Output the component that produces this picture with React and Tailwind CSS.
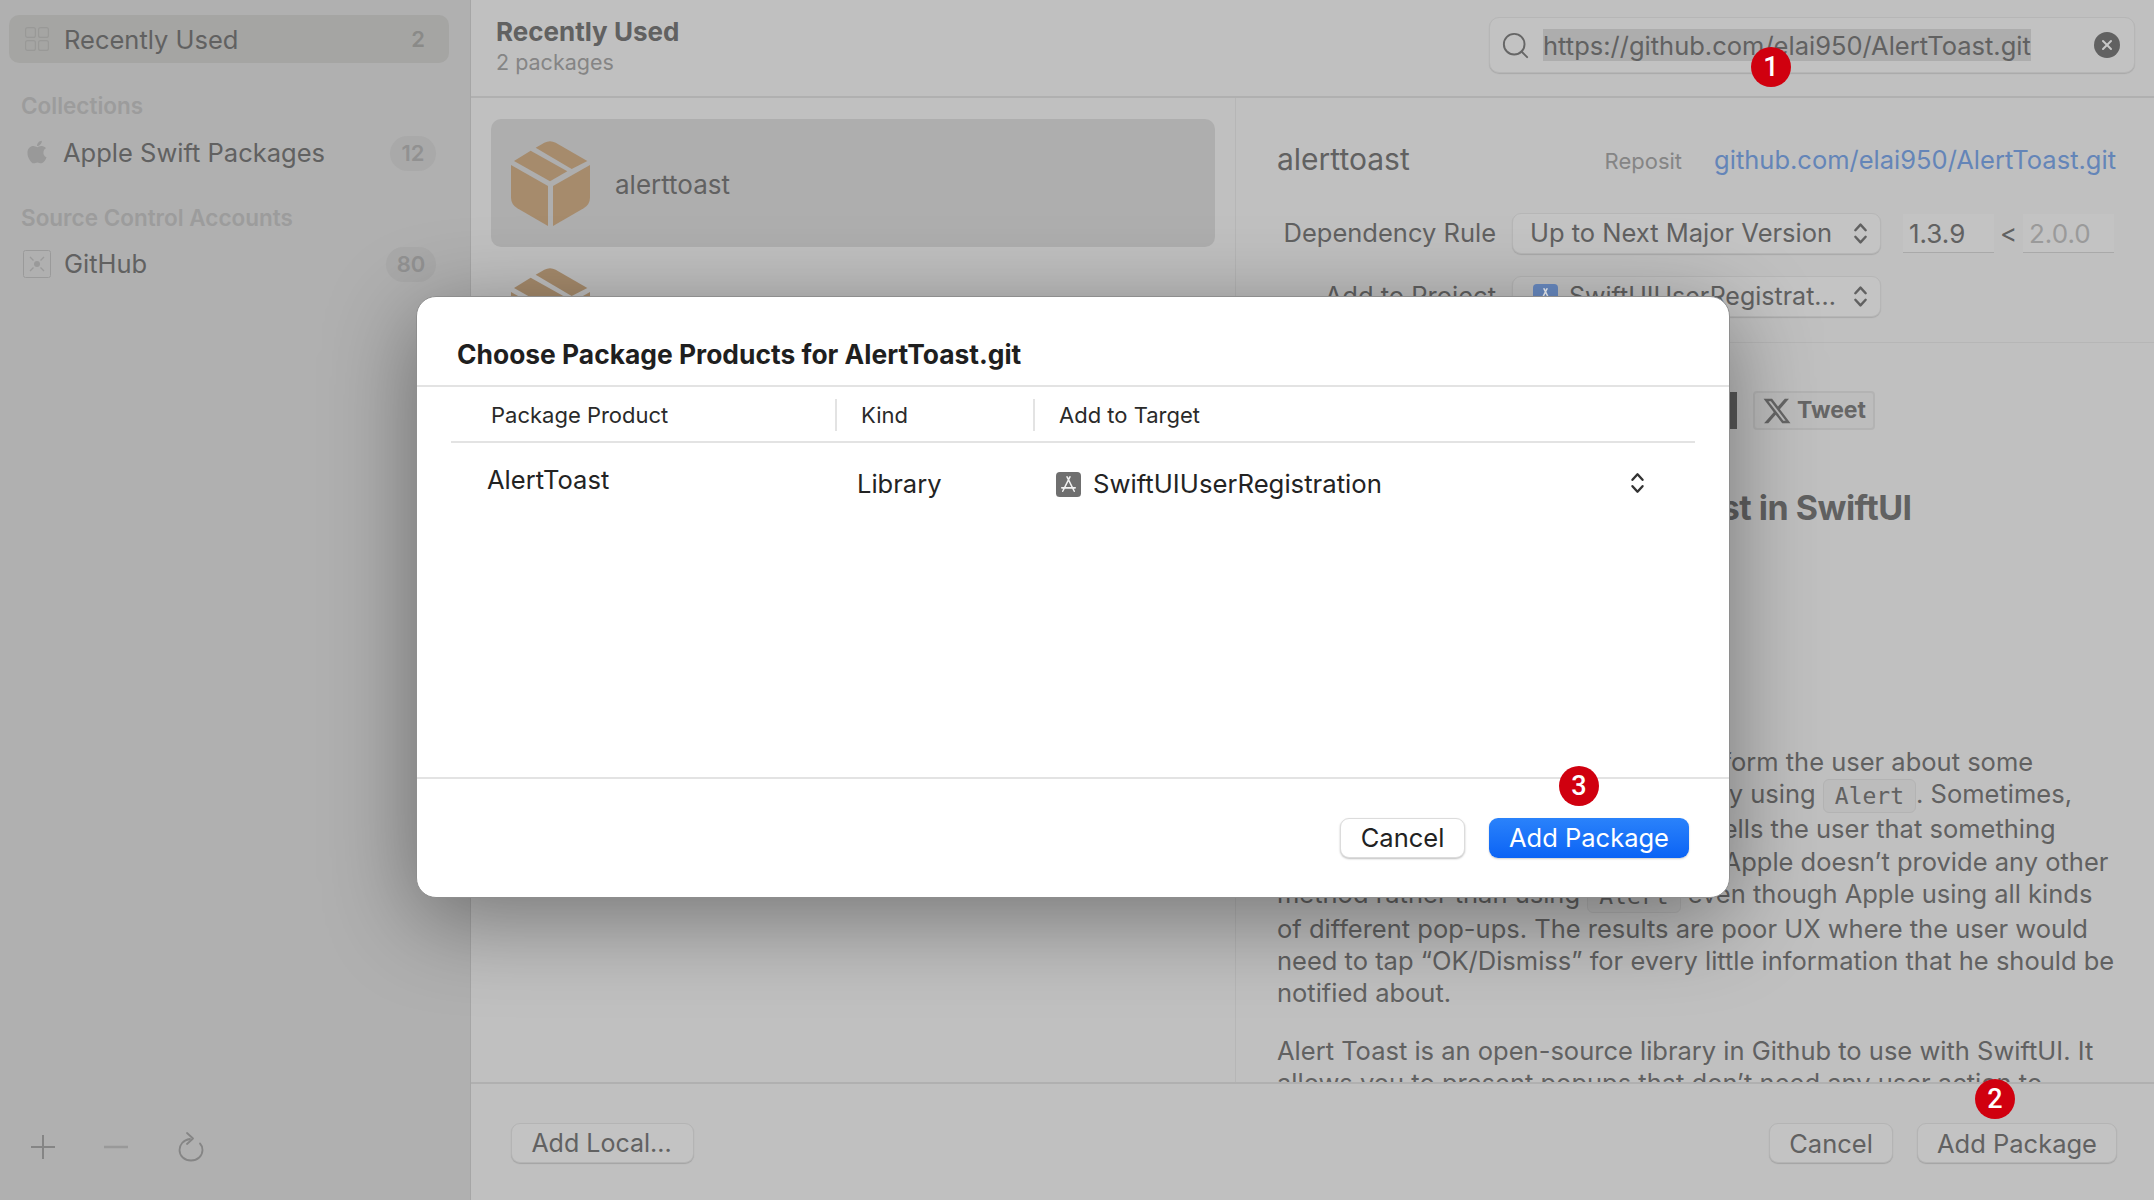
import { FaApple } from "react-icons/fa";
import { FaXTwitter } from "react-icons/fa6";
import { Search, X } from "lucide-react";

const BoxIcon = ({ className }) => (
  <svg viewBox="93 93 237 255" className={className} fill="#a68b6c">
    <path d="M93 165 L204 228 V348 L112 295 Q93 284 93 262 Z" />
    <path d="M219 228 L330 165 V262 Q330 284 311 295 L219 348 Z" />
    <path d="M102 153 L152 122 L262 184 L210 214 Z" />
    <path d="M167 113 L193 98 Q210 89 227 98 L322 153 L275 177 Z" />
  </svg>
);

const UpDown = ({ className, stroke = "#616161" }) => (
  <svg viewBox="0 0 16 24" className={className} fill="none" stroke={stroke} strokeWidth="2.6" strokeLinecap="round" strokeLinejoin="round">
    <path d="M2.5 8.5 L8 2.5 L13.5 8.5" />
    <path d="M2.5 15.5 L8 21.5 L13.5 15.5" />
  </svg>
);

const AppIcon = ({ className, bg }) => (
  <svg viewBox="0 0 26 26" className={className}>
    <rect width="26" height="26" rx="4" fill={bg} />
    <path d="M14.5 5 L7 20 M11.5 5 L19 20 M6 16.5 H20" stroke="#fff" strokeWidth="1.6" strokeLinecap="round" opacity="0.9" />
  </svg>
);

const GridIcon = () => (
  <svg viewBox="0 0 24 24" className="w-[24px] h-[24px]" fill="none" stroke="#999997" strokeWidth="1.2">
    <rect x="0.6" y="0.6" width="9.8" height="9.8" rx="2" />
    <rect x="13.6" y="0.6" width="9.8" height="9.8" rx="2" />
    <rect x="0.6" y="13.6" width="9.8" height="9.8" rx="2" />
    <rect x="13.6" y="13.6" width="9.8" height="9.8" rx="2" />
  </svg>
);

const GithubBox = () => (
  <svg viewBox="0 0 28 28" className="w-[28px] h-[28px]" fill="none" stroke="#9a9a9a" strokeWidth="1">
    <rect x="0.5" y="0.5" width="27" height="27" rx="2" />
    <circle cx="14" cy="14" r="3" fill="#9a9a9a" stroke="none" />
    <path d="M7 7 L10.5 10.5 M21 7 L17.5 10.5 M7 21 L10.5 17.5 M21 21 L17.5 17.5" strokeWidth="1.4" />
  </svg>
);

const Badge = ({ n, className }) => (
  <div className={`absolute w-[40px] h-[40px] rounded-full bg-[#d0000f] text-white flex items-center justify-center text-[27px] font-medium font-['Roboto',sans-serif] ${className}`}>
    {n}
  </div>
);

const FooterButton = ({ children, className }) => (
  <button className={`h-[40px] rounded-[9px] bg-[#c3c3c3] border border-[#b4b4b4] shadow-[0_1px_1px_rgba(0,0,0,0.15)] text-[#616161] flex items-center justify-center pt-[2px] ${className}`}>
    {children}
  </button>
);

const SectionLabel = ({ children, className }) => (
  <div className={`pl-[21px] text-[22.5px] font-semibold text-[#9c9c9c] leading-[26px] ${className}`}>{children}</div>
);

const Count = ({ n, className }) => (
  <span className={`h-[35px] rounded-full bg-[#a9a9a9] text-[#919191] text-[22px] font-semibold flex items-center justify-center ${className}`}>
    {n}
  </span>
);

const Code = ({ children }) => (
  <code className="inline-block px-[11px] h-[34px] leading-[32px] rounded-[6px] border border-[#b3b3b3] bg-[#bcbcbc] font-['DejaVu_Sans_Mono',monospace] text-[23px] align-middle">
    {children}
  </code>
);

const Sidebar = () => (
  <aside className="w-[471px] h-full shrink-0 bg-[#b0b0b0] border-r border-[#a6a6a6] flex flex-col">
    <div className="mt-[15px] mx-[9px] w-[440px] h-[48px] rounded-[10px] bg-[#a5a5a3] flex items-center pl-[16px] pr-[24px]">
      <GridIcon />
      <span className="ml-[15px] pt-[2px] text-[25.5px] text-[#616161]">Recently Used</span>
      <span className="ml-auto text-[22px] font-semibold text-[#8a8a88]">2</span>
    </div>
    <SectionLabel className="mt-[30px]">Collections</SectionLabel>
    <div className="mt-[14px] h-[40px] flex items-center pl-[24px] pr-[34px]">
      <FaApple className="w-[26px] h-[26px] text-[#999] -mt-[2px]" />
      <span className="ml-[13px] text-[25.5px] text-[#616161]">Apple Swift Packages</span>
      <Count n="12" className="ml-auto w-[46px]" />
    </div>
    <SectionLabel className="mt-[32px]">Source Control Accounts</SectionLabel>
    <div className="mt-[13px] h-[40px] flex items-center pl-[23px] pr-[34px]">
      <GithubBox />
      <span className="ml-[13px] text-[25.5px] text-[#616161]">GitHub</span>
      <Count n="80" className="ml-auto w-[50px]" />
    </div>
    <div className="mt-auto mb-[38px] pl-[31px] flex items-center text-[#8a8a8a]">
      <svg viewBox="0 0 24 24" className="w-[24px] h-[24px]" stroke="#858585" strokeWidth="2"><path d="M12 0 V24 M0 12 H24" /></svg>
      <svg viewBox="0 0 24 24" className="ml-[49px] w-[24px] h-[24px]" stroke="#999" strokeWidth="2.5"><path d="M0 12 H24" /></svg>
      <svg viewBox="0 0 26 30" className="ml-[50px] w-[26px] h-[30px]" fill="none" stroke="#858585" strokeWidth="1.8" strokeLinecap="round" strokeLinejoin="round">
        <path d="M12 7 C5 8 1.5 13 1.5 18 C1.5 24 6.5 28.5 13 28.5 C19.5 28.5 24.5 24 24.5 18 C24.5 15.5 23.5 13 22 11.5" />
        <path d="M9 1 L15 6.5 L9 12" />
      </svg>
    </div>
  </aside>
);

const PackageList = () => (
  <div className="w-[765px] shrink-0 border-r border-[#b6b6b6] pt-[21px] pl-[20px] overflow-hidden">
    <div className="w-[724px] h-[128px] rounded-[10px] bg-[#aeaeae] flex items-center pl-[20px]">
      <BoxIcon className="w-[79px] h-[85px]" />
      <span className="ml-[25px] pt-[2px] text-[26px] text-[#616161]">alerttoast</span>
    </div>
    <div className="pl-[20px] mt-[21px]">
      <BoxIcon className="w-[79px] h-[85px]" />
    </div>
  </div>
);

const Field = ({ children, className }) => (
  <div className={`h-[39px] w-[91px] bg-[#c3c3c3] border-b border-[#a9a9a9] flex items-center pl-[6px] text-[26px] ${className}`}>{children}</div>
);

const Select = ({ children }) => (
  <div className="w-[369px] h-[41px] rounded-[9px] bg-[#c4c4c4] border border-[#b6b6b6] shadow-[0_1px_1px_rgba(0,0,0,0.12)] flex items-center pl-[17px] pr-[12px] text-[25.5px] text-[#616161]">
    {children}
    <UpDown className="ml-auto w-[15px] h-[23px] shrink-0" />
  </div>
);

const Details = () => (
  <div className="flex-1 overflow-hidden">
    <div className="h-[245px] border-b border-[#b6b6b6] pl-[41px]">
      <div className="h-[84px] pt-[38px] flex items-center justify-between pr-[38px]">
        <span className="text-[30px] text-[#616161]">alerttoast</span>
        <span className="ml-auto text-[22px] text-[#858585] mt-[4px]">Reposit</span>
        <span className="ml-[32px] text-[25.5px] text-[#6485b8] mt-[3px]">github.com/elai950/AlertToast.git</span>
      </div>
      <div className="mt-[31px] flex items-center">
        <span className="w-[219px] text-right text-[25.5px] text-[#616161]">Dependency Rule</span>
        <div className="ml-[16px]"><Select>Up to Next Major Version</Select></div>
        <Field className="ml-[22px] text-[#616161]">1.3.9</Field>
        <span className="w-[29px] text-center text-[26px] text-[#616161]">&lt;</span>
        <Field className="text-[#9a9a9a]">2.0.0</Field>
      </div>
      <div className="mt-[22px] flex items-center">
        <span className="w-[219px] text-right text-[25.5px] text-[#616161]">Add to Project</span>
        <div className="ml-[16px]">
          <Select>
            <AppIcon className="w-[25px] h-[25px] ml-[3px] mr-[11px]" bg="#6a8cc4" />
            <span className="text-[25px]">SwiftUIUserRegistrat...</span>
          </Select>
        </div>
      </div>
    </div>
    <div className="pl-[41px] pr-[30px]">
      <div className="mt-[48px] flex items-center justify-end h-[39px]">
        <div className="h-[37px] w-[140px] bg-[#5a5a5a] mr-[16px]" />
        <div className="h-[39px] w-[122px] mr-[249px] rounded-[4px] border-2 border-[#b3b3b3] bg-[#bdbdbd] flex items-center justify-center gap-[5px] text-[#666] font-bold text-[23px]">
          <FaXTwitter className="w-[30px] h-[30px]" />
          Tweet
        </div>
      </div>
      <h1 className="mt-[56px] text-[34px] leading-[44px] font-bold text-[#616161] tracking-[-0.5px] whitespace-nowrap">How to design the Alert Toast in SwiftUI</h1>
      <div className="mt-[216px] text-[25.5px] text-[#616161]">
        <p className="h-[32px] leading-[32px] whitespace-nowrap">For making apps, we often need to inform the user about some</p>
        <p className="h-[35px] leading-[32px] whitespace-nowrap">kind of error, and we usually do this by using <Code>Alert</Code>. Sometimes,</p>
        <p className="h-[33px] leading-[32px] whitespace-nowrap">we need a single message that only tells the user that something</p>
        <p className="h-[32px] leading-[32px] whitespace-nowrap">has happened in the background, so Apple doesn’t provide any other</p>
        <p className="h-[35px] leading-[32px] whitespace-nowrap">method rather than using <Code>Alert</Code> even though Apple using all kinds</p>
        <p className="h-[32px] leading-[32px] whitespace-nowrap">of different pop-ups. The results are poor UX where the user would</p>
        <p className="h-[32px] leading-[32px] whitespace-nowrap">need to tap “OK/Dismiss” for every little information that he should be</p>
        <p className="h-[58px] leading-[32px] whitespace-nowrap">notified about.</p>
        <p className="h-[32px] leading-[32px] whitespace-nowrap">Alert Toast is an open-source library in Github to use with SwiftUI. It</p>
        <p className="h-[32px] leading-[32px] whitespace-nowrap">allows you to present popups that don’t need any user action to</p>
      </div>
    </div>
  </div>
);

const Main = () => (
  <main className="flex-1 min-w-0 h-full flex flex-col bg-[#c0c0c0]">
    <header className="h-[98px] shrink-0 border-b-2 border-[#b0b0b0] flex pl-[25px] pr-[19px]">
      <div className="pt-[15px]">
        <div className="text-[26px] leading-[34px] font-bold text-[#616161]">Recently Used</div>
        <div className="text-[21.5px] leading-[26px] text-[#858585]">2 packages</div>
      </div>
      <div className="ml-auto mt-[17px] w-[646px] h-[56px] rounded-[10px] bg-[#c2c2c2] border border-[#b6b6b6] shadow-[0_1px_1px_rgba(0,0,0,0.12)] flex items-center pl-[10px] pr-[14px]">
        <Search className="w-[31px] h-[31px] text-[#666]" strokeWidth={1.5} />
        <span className="ml-[12px] h-[32px] leading-[34px] bg-[#adadad] text-[25.5px] text-[#616161] whitespace-nowrap">https://github.com/elai950/AlertToast.git</span>
        <span className="ml-auto w-[26px] h-[26px] rounded-full bg-[#616161] flex items-center justify-center">
          <X className="w-[16px] h-[16px] text-[#c8c8c8]" strokeWidth={3} />
        </span>
      </div>
    </header>
    <div className="flex-1 min-h-0 flex">
      <PackageList />
      <Details />
    </div>
    <footer className="h-[118px] shrink-0 border-t-2 border-[#b0b0b0] bg-[#c0c0c0] flex items-start pt-[39px] pl-[40px] pr-[37px]">
      <FooterButton className="w-[183px] pr-[2px] text-[25px]">Add Local...</FooterButton>
      <FooterButton className="ml-auto w-[124px] text-[25.5px]">Cancel</FooterButton>
      <FooterButton className="ml-[24px] w-[200px] text-[25.5px]">Add Package</FooterButton>
    </footer>
  </main>
);

const Modal = () => (
  <div className="absolute left-[416px] top-[296px] w-[1314px] h-[602px] rounded-[20px] bg-white border border-[#8e8e8e] shadow-[0_20px_90px_rgba(0,0,0,0.4)] flex flex-col">
    <div className="h-[90px] shrink-0 border-b-2 border-[#e3e3e3] pl-[40px] pt-[41px] text-[26.4px] leading-[32px] font-bold text-[#1f1f1f]">
      Choose Package Products for AlertToast.git
    </div>
    <div className="mx-[34px] h-[56px] shrink-0 border-b-2 border-[#e3e3e3] flex items-center pt-[2px] text-[22px] text-[#2a2a2a]">
      <div className="w-[386px] pl-[40px] h-[32px] flex items-center border-r-2 border-[#e3e3e3]">Package Product</div>
      <div className="w-[198px] pl-[24px] h-[32px] flex items-center border-r-2 border-[#e3e3e3]">Kind</div>
      <div className="pl-[24px]">Add to Target</div>
    </div>
    <div className="mx-[34px] flex-1 min-h-0 pt-[23px] text-[25.5px] text-[#232323]">
      <div className="flex items-center h-[36px]">
        <div className="w-[406px] pl-[36px] -mt-[8px]">AlertToast</div>
        <div className="w-[199px]">Library</div>
        <AppIcon className="w-[25px] h-[25px]" bg="#6f6f6f" />
        <span className="ml-[12px] text-[25.7px]">SwiftUIUserRegistration</span>
        <UpDown className="ml-auto mr-[50px] w-[15px] h-[22px] -mt-[2px]" stroke="#333" />
      </div>
    </div>
    <div className="h-[120px] shrink-0 border-t-2 border-[#e3e3e3] flex items-start justify-end pt-[39px] pr-[40px]">
      <button className="w-[125px] h-[40px] rounded-[9px] bg-white border border-[#dcdcdc] shadow-[0_1px_2px_rgba(0,0,0,0.25)] text-[25.5px] text-[#222]">Cancel</button>
      <button className="ml-[24px] w-[200px] h-[40px] rounded-[9px] bg-gradient-to-b from-[#2a82fb] to-[#0a63f5] text-[25.5px] text-white shadow-[0_1px_2px_rgba(0,0,0,0.2)]">Add Package</button>
    </div>
  </div>
);

export default function App() {
  return (
    <div className="relative w-[2154px] h-[1200px] overflow-hidden flex bg-[#c0c0c0] font-['Inter',sans-serif]">
      <Sidebar />
      <Main />
      <Modal />
      <Badge n="1" className="left-[1751px] top-[47px]" />
      <Badge n="2" className="left-[1975px] top-[1079px]" />
      <Badge n="3" className="left-[1559px] top-[766px]" />
    </div>
  );
}
